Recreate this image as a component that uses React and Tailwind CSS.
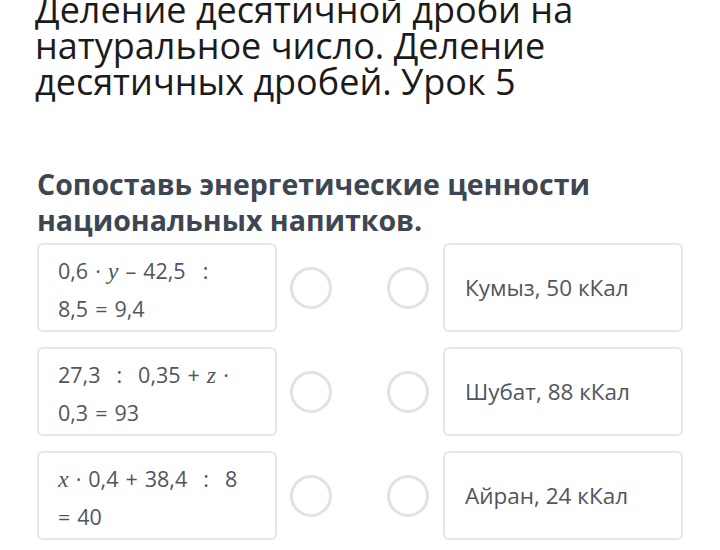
import React from 'react';

function V({ children }) {
  return <i className="font-['Liberation_Serif',serif] text-[24px]">{children}</i>;
}

function Op({ children }) {
  return <span className="mx-[7px]">{children}</span>;
}

const rows = [
  {
    left: (
      <>
        0,6<Op>·</Op><V>y</V><Op>–</Op>42,5<span className="ml-[17px]">:</span>
        <br />
        8,5<Op>=</Op>9,4
      </>
    ),
    right: 'Кумыз, 50 кКал',
  },
  {
    left: (
      <>
        27,3<span className="mx-[16px]">:</span>0,35<Op>+</Op><V>z</V><Op>·</Op>
        <br />
        0,3<Op>=</Op>93
      </>
    ),
    right: 'Шубат, 88 кКал',
  },
  {
    left: (
      <>
        <V>x</V><Op>·</Op>0,4<Op>+</Op>38,4<span className="mx-[16px]">:</span>8
        <br />
        =<span className="ml-[7px]">40</span>
      </>
    ),
    right: 'Айран, 24 кКал',
  },
];

function Radio() {
  return <div className="w-[42px] h-[42px] rounded-full border-[3px] border-[#dfe2e6] bg-white" />;
}

export default function App() {
  return (
    <div className="w-[720px] h-[550px] overflow-hidden bg-white">
      {/* Lesson title */}
      <h1 className="mt-[-8px] pl-[35px] font-['Open_Sans',sans-serif] text-[36px] leading-[36px] text-[#1b1b1b]">
        Деление десятичной дроби на
        <br />
        натуральное число. Деление
        <br />
        десятичных дробей. Урок 5
      </h1>

      {/* Question */}
      <h2 className="mt-[66px] pl-[37px] font-['Open_Sans',sans-serif] font-bold text-[28.5px] leading-[36px] text-[#3d4653]">
        Сопоставь энергетические ценности
        <br />
        национальных напитков.
      </h2>

      {/* Matching rows */}
      <div className="mt-[5px] pl-[37px] flex flex-col gap-[15px]">
        {rows.map((r, i) => (
          <div key={i} className="flex items-center">
            <div className="w-[240px] h-[89px] rounded-md border-2 border-[#e4e6e9] pl-[19px] pt-[7px] font-['Open_Sans',sans-serif] text-[21.5px] leading-[38px] text-[#50565e]">
              {r.left}
            </div>
            <div className="ml-[13px]">
              <Radio />
            </div>
            <div className="ml-[55px]">
              <Radio />
            </div>
            <div className="ml-[14px] w-[240px] h-[89px] rounded-md border-2 border-[#e4e6e9] pl-[20px] flex items-center font-['Open_Sans',sans-serif] text-[22.5px] text-[#50565e]">
              {r.right}
            </div>
          </div>
        ))}
      </div>
    </div>
  );
}
